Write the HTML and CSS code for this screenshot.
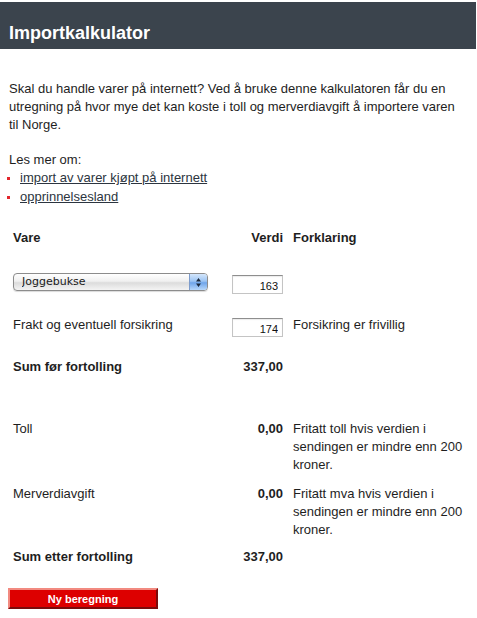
FILE: index.html
```html
<!DOCTYPE html>
<html lang="no">
<head>
<meta charset="utf-8">
<title>Importkalkulator</title>
<link rel="stylesheet" href="styles.css">
</head>
<body>
<header class="topbar"><h1 class="title">Importkalkulator</h1></header>
<main class="content">
  <p class="intro">Skal du handle varer på internett? Ved å bruke denne kalkulatoren får du en utregning på hvor mye det kan koste i toll og merverdiavgift å importere varen til Norge.</p>
  <p class="readmore">Les mer om:</p>
  <ul class="links">
    <li><a href="#">import av varer kjøpt på internett</a></li>
    <li><a href="#">opprinnelsesland</a></li>
  </ul>
  <div class="calc">
    <div class="row row-head bold">
      <div class="c1">Vare</div><div class="c2">Verdi</div><div class="c3">Forklaring</div>
    </div>
    <div class="row row-select">
      <div class="c1">
        <div class="selectbox">
          <select class="select"><option>Joggebukse</option></select>
          <span class="arrows"><svg width="7" height="11" viewBox="0 0 7 11"><path d="M3.5 1 L6 4.5 H1 Z M3.5 10 L6 6.5 H1 Z" fill="#1c2a3c"/></svg></span>
        </div>
      </div>
      <div class="c2"><input class="num" type="text" value="163"></div>
      <div class="c3"></div>
    </div>
    <div class="row row-frakt">
      <div class="c1">Frakt og eventuell forsikring</div>
      <div class="c2"><input class="num" type="text" value="174"></div>
      <div class="c3">Forsikring er frivillig</div>
    </div>
    <div class="row row-sum1 bold">
      <div class="c1">Sum før fortolling</div><div class="c2">337,00</div><div class="c3"></div>
    </div>
    <div class="row row-toll">
      <div class="c1">Toll</div><div class="c2 bold">0,00</div><div class="c3">Fritatt toll hvis verdien i sendingen er mindre enn 200 kroner.</div>
    </div>
    <div class="row row-mva">
      <div class="c1">Merverdiavgift</div><div class="c2 bold">0,00</div><div class="c3">Fritatt mva hvis verdien i sendingen er mindre enn 200 kroner.</div>
    </div>
    <div class="row row-sum2 bold">
      <div class="c1">Sum etter fortolling</div><div class="c2">337,00</div><div class="c3"></div>
    </div>
  </div>
  <button class="btn" type="button">Ny beregning</button>
</main>
</body>
</html>
```
FILE: styles.css
```css
body {
  margin: 0;
  font-family: "Liberation Sans", Arial, sans-serif;
  font-size: 13px;
  line-height: 18px;
  color: #1e1e1e;
  background: #fff;
}
.topbar {
  margin: 2px 1px 0 0;
  height: 25px;
  padding: 22px 0 0 9px;
  background: #3b444d;
}
.title {
  margin: 0;
  font-size: 18px;
  line-height: 18px;
  font-weight: bold;
  color: #fff;
}
.content {
  padding: 0 9px;
}
.intro {
  margin: 31px 0 0;
  padding-right: 6px;
}
.readmore {
  margin: 17px 0 0;
}
.links {
  list-style: none;
  margin: 0;
  padding: 0;
}
.links li {
  display: flex;
  align-items: center;
  height: 18.5px;
}
.links li::before {
  content: "";
  width: 3px;
  height: 3px;
  background: #e3262c;
  margin: 1px 10px 0 -2px;
}
.links a {
  color: #2c3540;
  text-decoration: underline;
}
.calc {
  margin-top: 23px;
  padding-left: 4px;
}
.row {
  display: grid;
  grid-template-columns: 199px 61px 172px;
  column-gap: 10px;
  align-items: start;
}
.c2 {
  text-align: right;
  display: flex;
  justify-content: flex-end;
}
.bold, .bold > div {
  font-weight: bold;
}
.row-select { margin-top: 26px; }
.row-frakt { margin-top: 22px; }
.row-sum1 { margin-top: 21px; }
.row-toll { margin-top: 44px; }
.row-mva { margin-top: 11px; }
.row-sum2 { margin-top: 9px; }

.selectbox {
  display: flex;
  width: 195px;
  height: 18px;
  box-sizing: border-box;
  border: 1px solid #8c8c8c;
  border-radius: 4px;
  background: linear-gradient(#ffffff, #f0f0f0 45%, #dcdcdc 55%, #f4f4f4);
  box-shadow: 0 1px 1px rgba(0,0,0,0.15);
  overflow: hidden;
}
.select {
  flex: 1;
  appearance: none;
  -webkit-appearance: none;
  border: 0;
  background: transparent;
  font-family: "DejaVu Sans", sans-serif;
  font-size: 11px;
  color: #1a1a1a;
  padding: 0 0 0 8px;
  height: 16px;
  line-height: 16px;
  outline: none;
}
.arrows {
  width: 17px;
  display: flex;
  align-items: center;
  justify-content: center;
  border-left: 1px solid #7d9ccc;
  background: linear-gradient(#d4e6fb, #9cc4f3 45%, #6fa5ea 55%, #b8d8fb);
}
.num {
  width: 51px;
  height: 19px;
  box-sizing: border-box;
  margin: 2px 0 0;
  border: 1px solid #c4c4c4;
  border-top-color: #8e8e8e;
  box-shadow: inset 0 1px 1px rgba(0,0,0,0.08);
  font-family: "Liberation Sans", Arial, sans-serif;
  font-size: 11px;
  text-align: right;
  padding: 2px 4px 0;
  color: #111;
}
.btn {
  display: block;
  margin: 22px 0 0 -1px;
  width: 150px;
  height: 21px;
  box-sizing: border-box;
  background: #dd0000;
  border: 2px solid;
  border-color: #f28a80 #7a0b0b #7a0b0b #f28a80;
  color: #fff;
  font-family: "Liberation Sans", Arial, sans-serif;
  font-size: 11px;
  font-weight: bold;
  padding: 0;
}
```
